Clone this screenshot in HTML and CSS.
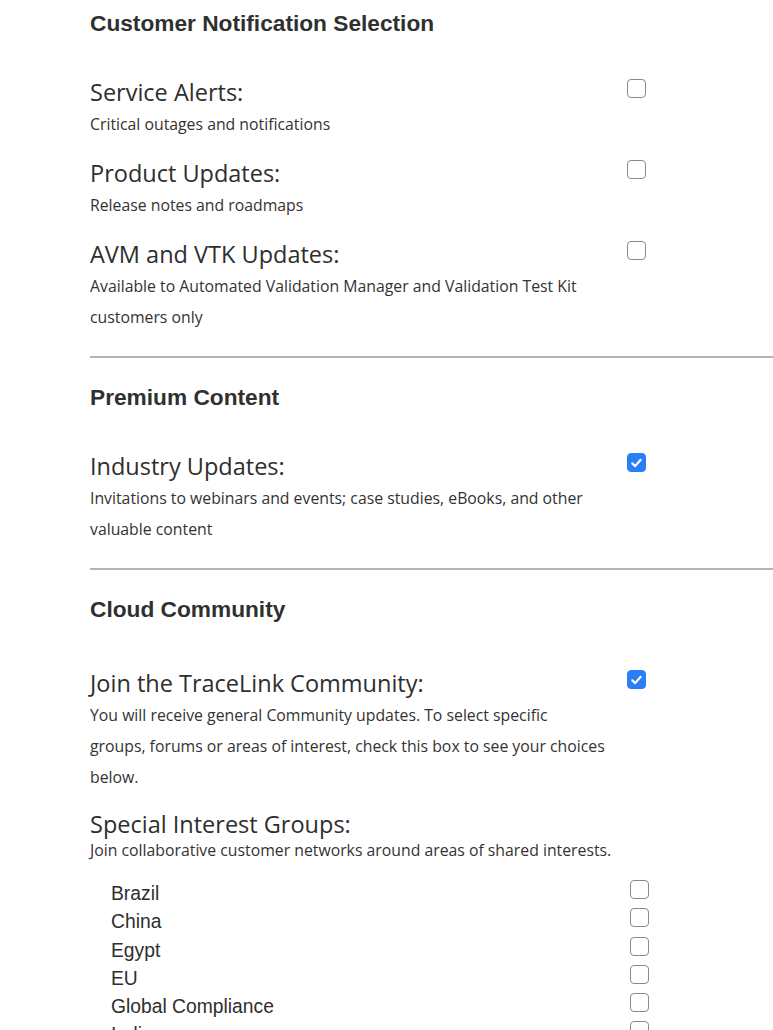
FILE: index.html
```html
<!DOCTYPE html>
<html lang="en">
<head>
<meta charset="utf-8">
<title>Customer Notification Selection</title>
<link rel="stylesheet" href="styles.css">
</head>
<body>
<main class="page">
  <section class="group">
    <h2 class="group-title">Customer Notification Selection</h2>
    <div class="option">
      <div class="option-text">
        <h3 class="option-title">Service Alerts:</h3>
        <p class="option-desc">Critical outages and notifications</p>
      </div>
      <span class="box"></span>
    </div>
    <div class="option">
      <div class="option-text">
        <h3 class="option-title">Product Updates:</h3>
        <p class="option-desc">Release notes and roadmaps</p>
      </div>
      <span class="box"></span>
    </div>
    <div class="option">
      <div class="option-text">
        <h3 class="option-title">AVM and VTK Updates:</h3>
        <p class="option-desc">Available to Automated Validation Manager and Validation Test Kit customers only</p>
      </div>
      <span class="box"></span>
    </div>
  </section>
  <hr class="rule">
  <section class="group">
    <h2 class="group-title">Premium Content</h2>
    <div class="option">
      <div class="option-text">
        <h3 class="option-title">Industry Updates:</h3>
        <p class="option-desc">Invitations to webinars and events; case studies, eBooks, and other valuable content</p>
      </div>
      <span class="box checked"><svg viewBox="0 0 18 18" width="18" height="18"><path d="M4.6 9.4 L7.6 12.3 L13.4 5.6" fill="none" stroke="#fff" stroke-width="2.3" stroke-linecap="round" stroke-linejoin="round"/></svg></span>
    </div>
  </section>
  <hr class="rule">
  <section class="group">
    <h2 class="group-title group-title-wide">Cloud Community</h2>
    <div class="option">
      <div class="option-text">
        <h3 class="option-title">Join the TraceLink Community:</h3>
        <p class="option-desc">You will receive general Community updates. To select specific groups, forums or areas of interest, check this box to see your choices below.</p>
      </div>
      <span class="box checked"><svg viewBox="0 0 18 18" width="18" height="18"><path d="M4.6 9.4 L7.6 12.3 L13.4 5.6" fill="none" stroke="#fff" stroke-width="2.3" stroke-linecap="round" stroke-linejoin="round"/></svg></span>
    </div>
    <div class="sig">
      <h3 class="option-title">Special Interest Groups:</h3>
      <p class="sig-desc">Join collaborative customer networks around areas of shared interests.</p>
      <ul class="sig-list">
        <li class="sig-item"><span class="sig-name">Brazil</span><span class="box"></span></li>
        <li class="sig-item"><span class="sig-name">China</span><span class="box"></span></li>
        <li class="sig-item"><span class="sig-name">Egypt</span><span class="box"></span></li>
        <li class="sig-item"><span class="sig-name">EU</span><span class="box"></span></li>
        <li class="sig-item"><span class="sig-name">Global Compliance</span><span class="box"></span></li>
        <li class="sig-item"><span class="sig-name">India</span><span class="box"></span></li>
        <li class="sig-item"><span class="sig-name">Japan</span><span class="box"></span></li>
      </ul>
    </div>
  </section>
</main>
</body>
</html>
```
FILE: styles.css
```css
* { box-sizing: border-box; }
html, body { margin: 0; padding: 0; background: #fff; }
body { overflow: hidden; height: 1030px; }
.page {
  padding: 9px 0 0 90px;
  color: #2b2b2b;
  font-family: "Open Sans", "Noto Sans", sans-serif;
}
.group { display: flex; flex-direction: column; }
.group-title {
  margin: 0 0 40px;
  font-family: "Liberation Sans", Arial, sans-serif;
  font-weight: 700;
  font-size: 22.7px;
  line-height: 28px;
  color: #303030;
}
.group-title-wide { margin-bottom: 45px; }
.option {
  display: grid;
  grid-template-columns: 515px 19px;
  column-gap: 22px;
  align-items: start;
  margin-bottom: 18px;
}
.option-text { display: flex; flex-direction: column; }
.option-title {
  margin: 0;
  font-weight: 400;
  font-size: 23.5px;
  line-height: 30px;
  color: #2e2e2e;
}
.option-desc {
  margin: 2px 0 0;
  font-size: 15.8px;
  line-height: 31px;
  color: #333;
}
.box {
  display: block;
  width: 19px;
  height: 19px;
  margin-top: 2px;
  border: 1.5px solid #8a8a8a;
  border-radius: 4px;
  background: #fff;
}
.box.checked {
  background: #2a7ef7;
  border-color: #2a7ef7;
  display: flex;
  align-items: center;
  justify-content: center;
}
.box.checked svg { display: block; }
.rule {
  margin: 5px 0 25px;
  border: 0;
  height: 2px;
  background: #b4b4b4;
}
.sig { display: flex; flex-direction: column; margin-top: -2px; }
.sig-desc {
  margin: 1px 0 0;
  font-size: 15.8px;
  line-height: 20px;
  color: #333;
}
.sig-list {
  list-style: none;
  margin: 20px 0 0;
  padding: 0 0 0 21px;
  display: flex;
  flex-direction: column;
}
.sig-item {
  display: grid;
  grid-template-columns: 498px 19px;
  column-gap: 21px;
  align-items: center;
  height: 28.25px;
}
.sig-name {
  font-family: "Liberation Sans", Arial, sans-serif;
  font-size: 19.3px;
  line-height: 28px;
  color: #2e2e2e;
}
.sig-item .box { margin-top: -9px; }
```
